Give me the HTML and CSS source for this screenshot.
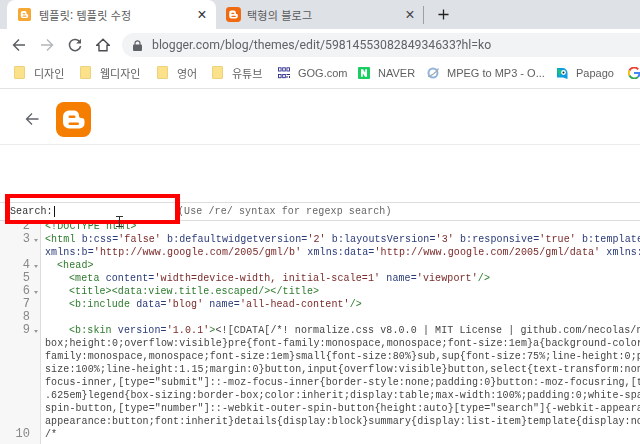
FILE: index.html
```html
<!DOCTYPE html>
<html lang="ko">
<head>
<meta charset="utf-8">
<title>템플릿 수정</title>
<link rel="stylesheet" href="styles.css">
</head>
<body>
<div class="tabstrip">
  <div class="tab active">
    <svg class="tabicon" viewBox="0 0 35 35"><rect width="35" height="35" rx="5" fill="#f7a733"/><path d="M13 8h5a5 5 0 0 1 5 5v1.500a2 2 0 0 0 2 2h0a2.500 2.500 0 0 1 2.500 2.500v3a5 5 0 0 1-5 5H13a5.500 5.500 0 0 1-5.500-5.500v-8A5.500 5.500 0 0 1 13 8z" fill="#fff"/><rect x="12.500" y="13.500" width="7" height="3" rx="1.500" fill="#f7a733"/><rect x="12.500" y="20.500" width="10.500" height="3" rx="1.500" fill="#f7a733"/></svg>
    <span class="tabtitle">템플릿: 템플릿 수정</span>
    <span class="tabclose">×</span>
  </div>
  <div class="tab second">
    <svg class="tabicon big" viewBox="0 0 35 35"><rect width="35" height="35" rx="8" fill="#f06a12"/><path d="M13 8h5a5 5 0 0 1 5 5v1.500a2 2 0 0 0 2 2h0a2.500 2.500 0 0 1 2.500 2.500v3a5 5 0 0 1-5 5H13a5.500 5.500 0 0 1-5.500-5.500v-8A5.500 5.500 0 0 1 13 8z" fill="#fff"/><rect x="12.500" y="13.500" width="7" height="3" rx="1.500" fill="#f06a12"/><rect x="12.500" y="20.500" width="10.500" height="3" rx="1.500" fill="#f06a12"/></svg>
    <span class="tabtitle">택형의 블로그</span>
    <span class="tabclose dim">×</span>
  </div>
  <span class="divider"></span>
  <svg class="plus" viewBox="0 0 12 12"><path d="M6 .5v11M.5 6h11" stroke="#222" stroke-width="1.4"/></svg>
</div>
<div class="toolbar">
  <svg class="nav first" viewBox="0 0 14 14"><path d="M13 7H2M7 1.500 1.500 7 7 12.500" fill="none" stroke="#5a5d61" stroke-width="1.400"/></svg>
  <svg class="nav" viewBox="0 0 14 14"><path d="M1 7h11M7 1.500 12.500 7 7 12.500" fill="none" stroke="#b3b6ba" stroke-width="1.400"/></svg>
  <svg class="nav" viewBox="0 0 14 14"><path d="M12 4.300A5.600 5.600 0 1 0 12.600 8" fill="none" stroke="#5a5d61" stroke-width="1.500"/><path d="M13 .8v4.800H8.200z" fill="#5a5d61"/></svg>
  <svg class="nav" viewBox="0 0 14 14"><path d="M7 1.200 .8 7.200h2.200v5.600h8V7.200h2.200z" fill="none" stroke="#4a4d51" stroke-width="1.400" stroke-linejoin="miter"/></svg>
  <div class="omnibox">
    <svg class="lock" viewBox="0 0 9 11"><path d="M2 5V3.300a2.500 2.500 0 0 1 5 0V5" fill="none" stroke="#5f6368" stroke-width="1.200"/><rect y="4.500" width="9" height="6.500" rx="1" fill="#5f6368"/></svg>
    <span class="url">blogger.com/blog/themes/edit/5981455308284934633?hl=ko</span>
  </div>
</div>
<div class="bookmarks">
  <span class="bm b1"><i class="folder"></i>디자인</span>
  <span class="bm b2"><i class="folder"></i>웹디자인</span>
  <span class="bm b3"><i class="folder"></i>영어</span>
  <span class="bm b4"><i class="folder"></i>유튜브</span>
  <span class="bm b5"><svg class="fav" viewBox="0 0 12 12"><g fill="none" stroke="#2d2a8c" stroke-width=".9"><rect x=".5" y=".8" width="2.600" height="3.200"/><rect x="4.700" y=".8" width="2.600" height="3.200"/><rect x="8.900" y=".8" width="2.600" height="3.200"/><rect x=".5" y="7.500" width="2.600" height="3.200"/><rect x="4.700" y="7.500" width="2.600" height="3.200"/></g><path d="M8.500 7h3.500v1H8.500zM8.500 9h1v2h-1zM11 9h1v2h-1z" fill="#2d2a8c"/></svg>GOG.com</span>
  <span class="bm b6"><svg class="fav" viewBox="0 0 12 12"><rect width="12" height="12" rx="1" fill="#19ce60"/><path d="M3 9.800V2.200h2l2.200 3.600V2.200H9v7.600H7L4.800 6.200v3.600z" fill="#fff"/></svg>NAVER</span>
  <span class="bm b7"><svg class="fav" viewBox="0 0 12 12"><circle cx="6" cy="6" r="4.500" fill="none" stroke="#8fb4dd" stroke-width="2"/><path d="M1 9.500C4 9 9 6 11.500 1.500" stroke="#a4acb8" stroke-width="1.400" fill="none"/></svg>MPEG to MP3 - O...</span>
  <span class="bm b8"><svg class="fav" viewBox="0 0 12 12"><path d="M1 1h5.500A5 5 0 0 1 11.500 6v6L7 10.500H1z" fill="#0f9ddf"/><path d="M1 1l5.500 3L3 9.500z" fill="#19c37d"/><circle cx="7.500" cy="5.500" r="2.400" fill="#fff"/><circle cx="7.500" cy="5.500" r="1" fill="#123"/></svg>Papago</span>
  <span class="bm b9"><svg class="gfav" viewBox="0 0 12 12"><path d="M10.200 2.300A5.400 5.400 0 0 0 1.400 3.500" fill="none" stroke="#ea4335" stroke-width="2"/><path d="M1.400 3.500a5.400 5.400 0 0 0 0 5" fill="none" stroke="#fbbc05" stroke-width="2"/><path d="M1.400 8.500a5.400 5.400 0 0 0 8.600 1.400" fill="none" stroke="#34a853" stroke-width="2"/><path d="M6 6h5.500c0 1.500-.6 3-1.500 3.900" fill="none" stroke="#4285f4" stroke-width="2"/></svg></span>
</div>
<div class="pagehead">
  <svg class="backarrow" viewBox="0 0 14 14"><path d="M13.500 7H1.500M7 1.500 1.500 7 7 12.500" fill="none" stroke="#5f6368" stroke-width="1.300"/></svg>
  <svg class="logo" viewBox="0 0 35 35"><rect width="35" height="35" rx="8" fill="#f57d00"/><path d="M13 8.500h5a5 5 0 0 1 5 5v.5a2 2 0 0 0 2 2h.500a3 3 0 0 1 3 3v2.500a5 5 0 0 1-5 5H13a6 6 0 0 1-6-6v-6a6 6 0 0 1 6-6z" fill="#fff"/><rect x="12.500" y="13.500" width="7" height="2.400" rx="1.200" fill="#f57d00"/><rect x="12.500" y="20.500" width="10.500" height="2.400" rx="1.200" fill="#f57d00"/></svg>
</div>
<div class="searchbar">
  <span class="searchlabel">Search:<b class="caret"></b></span>
  <span class="searchhint">(Use /re/ syntax for regexp search)</span>
</div>
<div class="redbox"></div>
<svg class="ibeam" viewBox="0 0 7 11"><path d="M0 .5h7M0 10.500h7M3.500 .5v10" stroke="#333" stroke-width="1" fill="none"/></svg>
<div class="editor">
  <div class="gutter">
    <div>2</div><div class="fold">3</div><div>&nbsp;</div><div class="fold">4</div><div>5</div><div class="fold">6</div><div>7</div><div>8</div><div class="fold">9</div>
    <div>&nbsp;</div><div>&nbsp;</div><div>&nbsp;</div><div>&nbsp;</div><div>&nbsp;</div><div>&nbsp;</div><div>&nbsp;</div><div>10</div>
  </div>
  <div class="code">
    <div class="ln"><span class="t">&lt;!DOCTYPE html&gt;</span></div>
    <div class="ln"><span class="t">&lt;html</span> <span class="a">b:css=</span><span class="s">'false'</span> <span class="a">b:defaultwidgetversion=</span><span class="s">'2'</span> <span class="a">b:layoutsVersion=</span><span class="s">'3'</span> <span class="a">b:responsive=</span><span class="s">'true'</span> <span class="a">b:template</span></div>
    <div class="ln"><span class="a">xmlns:b=</span><span class="s">'http://www.google.com/2005/gml/b'</span> <span class="a">xmlns:data=</span><span class="s">'http://www.google.com/2005/gml/data'</span> <span class="a">xmlns:</span></div>
    <div class="ln i1"><span class="t">&lt;head&gt;</span></div>
    <div class="ln i2"><span class="t">&lt;meta</span> <span class="a">content=</span><span class="s">'width=device-width, initial-scale=1'</span> <span class="a">name=</span><span class="s">'viewport'</span><span class="t">/&gt;</span></div>
    <div class="ln i2"><span class="t">&lt;title&gt;&lt;data:view.title.escaped/&gt;&lt;/title&gt;</span></div>
    <div class="ln i2"><span class="t">&lt;b:include</span> <span class="a">data=</span><span class="s">'blog'</span> <span class="a">name=</span><span class="s">'all-head-content'</span><span class="t">/&gt;</span></div>
    <div class="ln">&nbsp;</div>
    <div class="ln i2"><span class="t">&lt;b:skin</span> <span class="a">version=</span><span class="s">'1.0.1'</span><span class="t">&gt;</span>&lt;![CDATA[/*! normalize.css v8.0.0 | MIT License | github.com/necolas/n</div>
    <div class="ln">box;height:0;overflow:visible}pre{font-family:monospace,monospace;font-size:1em}a{background-color</div>
    <div class="ln">family:monospace,monospace;font-size:1em}small{font-size:80%}sub,sup{font-size:75%;line-height:0;p</div>
    <div class="ln">size:100%;line-height:1.15;margin:0}button,input{overflow:visible}button,select{text-transform:non</div>
    <div class="ln">focus-inner,[type="submit"]::-moz-focus-inner{border-style:none;padding:0}button:-moz-focusring,[t</div>
    <div class="ln">.625em}legend{box-sizing:border-box;color:inherit;display:table;max-width:100%;padding:0;white-spa</div>
    <div class="ln">spin-button,[type="number"]::-webkit-outer-spin-button{height:auto}[type="search"]{-webkit-appeara</div>
    <div class="ln">appearance:button;font:inherit}details{display:block}summary{display:list-item}template{display:no</div>
    <div class="ln">/*</div>
  </div>
</div>
</body>
</html>
```
FILE: styles.css
```css
* { box-sizing: border-box; }
html, body { margin: 0; padding: 0; }
body {
  width: 640px;
  height: 444px;
  overflow: hidden;
  position: relative;
  background: #fff;
  font-family: "Noto Sans CJK KR", "Liberation Sans", sans-serif;
  display: flex;
  flex-direction: column;
  filter: blur(.35px);
}
.tabstrip {
  height: 29px;
  flex: none;
  background: #dee1e6;
  display: flex;
  align-items: stretch;
  padding-left: 7px;
}
.tab {
  display: flex;
  align-items: center;
  font-size: 11px;
  color: #5a5a5a;
}
.tab.active {
  width: 209px;
  background: #fff;
  border-radius: 8px 8px 0 0;
  padding: 0 8px 0 11px;
}
.tab.second {
  width: 200px;
  padding: 0 0 0 10px;
}
.tabicon { width: 13px; height: 13px; flex: none; margin-right: 8px; }
.tabicon.big { width: 15px; height: 15px; margin-right: 6px; }
.tabtitle { flex: 1; white-space: nowrap; letter-spacing: .2px; }
.tabclose { font: 16px/16px "Liberation Sans", sans-serif; color: #333; width: 12px; text-align: center; }
.tabclose.dim { color: #444; }
.divider { width: 1px; height: 18px; background: #9aa0a6; margin: 6px 0 0 7px; }
.plus { width: 11px; height: 11px; margin: 9px 0 0 14px; }
.toolbar {
  height: 28px;
  flex: none;
  display: flex;
  align-items: flex-end;
}
.nav { width: 14px; height: 14px; margin: 0 0 5px 14px; flex: none; }
.nav.first { margin-left: 12px; }
.omnibox {
  flex: 1;
  height: 24px;
  margin-left: 12px;
  background: #f1f3f4;
  border-radius: 12px 0 0 12px;
  display: flex;
  align-items: center;
  padding-left: 11px;
}
.lock { width: 9px; height: 11px; margin-right: 10px; flex: none; }
.url { font: 12.25px "Roboto", "Liberation Sans", sans-serif; color: #5f6368; white-space: nowrap; }
.bookmarks {
  height: 32px;
  flex: none;
  border-bottom: 1px solid #e3e3e3;
  display: flex;
  align-items: center;
  font-size: 11px;
  color: #5f5f5f;
  white-space: nowrap;
}
.bm { display: flex; align-items: center; flex: none; }
.b1 { margin-left: 14px; width: 66px; }
.b2 { width: 77px; }
.b3 { width: 55px; }
.b4 { width: 66px; }
.b5 { width: 80px; font: 11px "Liberation Sans", sans-serif; }
.b6 { width: 69px; font: 11px "Liberation Sans", sans-serif; }
.b7 { width: 129px; font: 11px "Liberation Sans", sans-serif; }
.b8 { width: 72px; font: 11px "Liberation Sans", sans-serif; }
.b9 { width: 12px; }
.gfav { width: 12px; height: 12px; }
.folder {
  width: 11px;
  height: 13px;
  background: #fbe28a;
  border: 1px solid #ecd27a;
  border-radius: 1px;
  margin-right: 9px;
  flex: none;
}
.fav { width: 12px; height: 12px; margin-right: 8px; flex: none; }
.pagehead {
  height: 56px;
  flex: none;
  border-bottom: 1px solid #ececec;
  display: flex;
  align-items: center;
  padding: 5px 0 0 25px;
}
.backarrow { width: 14px; height: 14px; flex: none; margin-right: 17px; }
.logo { width: 35px; height: 35px; flex: none; }
.searchbar {
  margin-top: 57px;
  height: 19px;
  flex: none;
  border-top: 1px solid #ddd;
  border-bottom: 1px solid #ddd;
  display: flex;
  align-items: center;
  font: 10px/17px "Liberation Mono", monospace;
  letter-spacing: .1px;
  color: #555;
  white-space: pre;
}
.searchlabel { width: 178px; padding-left: 10px; color: #333; display: flex; align-items: center; }
.caret { width: 1px; height: 11px; background: #111; margin-left: 1px; }
.searchhint { color: #666; }
.redbox {
  position: absolute;
  left: 5px;
  top: 194px;
  width: 175px;
  height: 30px;
  border-style: solid;
  border-color: #f00;
  border-width: 4px 5px;
}
.ibeam { position: absolute; left: 116px; top: 216px; width: 7px; height: 11px; }
.editor {
  flex: 1;
  display: flex;
  overflow: hidden;
  font: 10px/13px "Liberation Mono", monospace;
  letter-spacing: .1px;
}
.gutter {
  width: 41px;
  flex: none;
  background: #f7f7f7;
  border-right: 1px solid #ddd;
  color: #888;
  text-align: right;
  font-size: 12px;
  padding-right: 10px;
}
.gutter > :first-child,
.code > :first-child { margin-top: -1px; }
.gutter .fold { position: relative; }
.gutter .fold::after {
  content: "";
  position: absolute;
  right: -8px;
  top: 6px;
  border: 2.5px solid transparent;
  border-top: 3px solid #999;
  border-bottom: 0;
}
.code {
  flex: 1;
  min-width: 0;
  padding-left: 4px;
  color: #444;
  overflow: hidden;
}
.ln { white-space: pre; height: 13px; }
.i1 { padding-left: 12px; }
.i2 { padding-left: 24px; }
.t { color: #2c7a2c; }
.a { color: #2a3a78; }
.s { color: #7a2a2a; }
```
